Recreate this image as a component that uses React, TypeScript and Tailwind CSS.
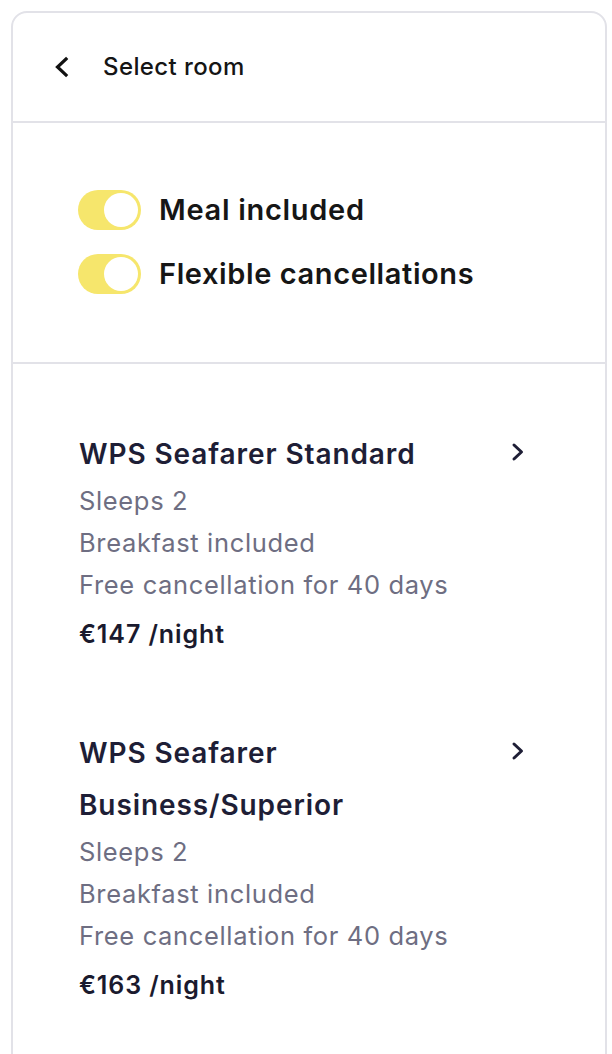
import React from "react";

function Toggle() {
  return (
    <div className="flex h-[40px] w-[63px] shrink-0 items-center justify-end rounded-full bg-[#f6e66c] pr-[3px]">
      <div className="h-[34px] w-[34px] rounded-full bg-white" />
    </div>
  );
}

function Chevron() {
  return (
    <svg width="14" height="20" viewBox="0 0 14 20" className="mt-[14px] shrink-0">
      <polyline points="3,3 10.5,10 3,17" fill="none" stroke="#1e1e36" strokeWidth="3" strokeLinecap="round" strokeLinejoin="round" />
    </svg>
  );
}

function Room({ title, price }: { title: string; price: string }) {
  return (
    <div className="flex items-start justify-between pr-[80px]">
      <div className="w-[420px]">
        <div className="text-[28px] font-semibold leading-[52px] tracking-[0.9px] text-[#1e1e36]">{title}</div>
        <div className="text-[25.5px] leading-[42px] tracking-[0.65px] text-[#6e6e82]">Sleeps 2</div>
        <div className="text-[25.5px] leading-[42px] tracking-[0.65px] text-[#6e6e82]">Breakfast included</div>
        <div className="text-[25.5px] leading-[42px] tracking-[0.65px] text-[#6e6e82]">Free cancellation for 40 days</div>
        <div className="text-[25px] font-semibold leading-[56px] tracking-[0.9px] text-[#1a1a2e]">{price}</div>
      </div>
      <Chevron />
    </div>
  );
}

export default function App() {
  return (
    <div className="min-h-[1054px] bg-white pl-[11px] pr-[5px] pt-[11px]" style={{ fontFamily: "Inter, 'Noto Sans', sans-serif" }}>
      <div className="h-[1060px] rounded-t-[16px] border-2 border-[#e2e2e8]">
        <div className="flex h-[108px] items-center gap-[33px] pl-[41px]">
          <svg width="16" height="22" viewBox="0 0 16 22">
            <polyline points="12,3 3.5,11 12,19" fill="none" stroke="#111" strokeWidth="3.2" strokeLinecap="square" strokeLinejoin="miter" />
          </svg>
          <span className="text-[24px] font-medium tracking-[0.4px] text-[#151515]">Select room</span>
        </div>
        <div className="border-t-2 border-[#e2e2e8]" />
        <div className="flex flex-col gap-[24px] pb-[68px] pl-[65px] pt-[67px]">
          <div className="flex items-center gap-[18px]">
            <Toggle />
            <span className="text-[29px] font-semibold leading-[40px] tracking-[0.7px] text-[#161616]">Meal included</span>
          </div>
          <div className="flex items-center gap-[18px]">
            <Toggle />
            <span className="text-[29px] font-semibold leading-[40px] tracking-[0.6px] text-[#161616]">Flexible cancellations</span>
          </div>
        </div>
        <div className="border-t-2 border-[#e2e2e8]" />
        <div className="flex flex-col gap-[65px] pl-[66px] pt-[64px]">
          <Room title="WPS Seafarer Standard" price="€147 /night" />
          <Room title="WPS Seafarer Business/Superior" price="€163 /night" />
        </div>
      </div>
    </div>
  );
}
